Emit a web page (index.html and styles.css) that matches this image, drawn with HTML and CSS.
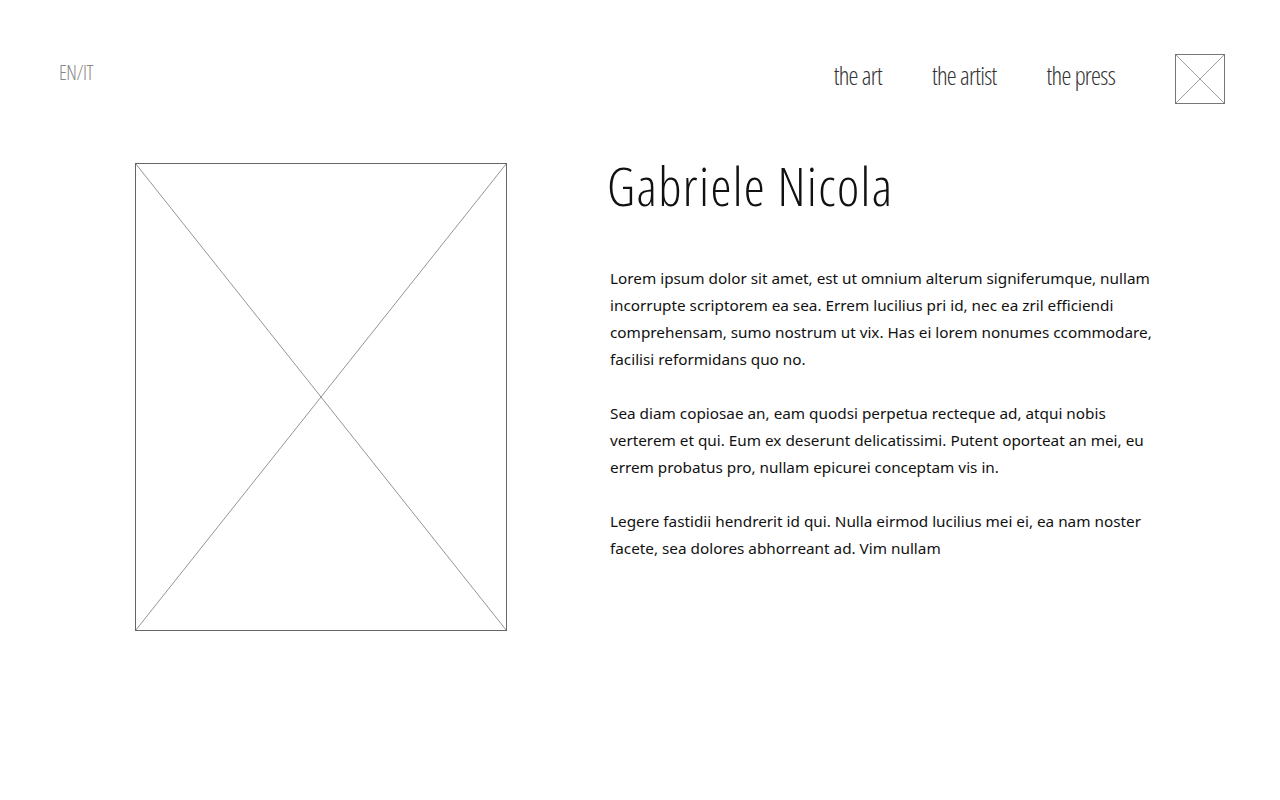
FILE: index.html
```html
<!DOCTYPE html>
<html lang="en">
<head>
<meta charset="utf-8">
<title>Gabriele Nicola</title>
<link rel="stylesheet" href="styles.css">
</head>
<body>
<header class="header">
  <div class="lang">EN/IT</div>
  <nav class="nav">
    <a href="#" class="nav-link">the art</a>
    <a href="#" class="nav-link">the artist</a>
    <a href="#" class="nav-link">the press</a>
  </nav>
  <div class="logo">
    <svg width="50" height="50" viewBox="0 0 50 50"><rect x="0.5" y="0.5" width="49" height="49" fill="none" stroke="#777" stroke-width="1"/><line x1="0.5" y1="0.5" x2="49.5" y2="49.5" stroke="#777" stroke-width="0.7"/><line x1="49.5" y1="0.5" x2="0.5" y2="49.5" stroke="#777" stroke-width="0.7"/></svg>
  </div>
</header>
<main class="main">
  <div class="photo">
    <svg width="372" height="468" viewBox="0 0 372 468"><rect x="0.5" y="0.5" width="371" height="467" fill="none" stroke="#666" stroke-width="1"/><line x1="0.5" y1="0.5" x2="371.5" y2="467.5" stroke="#666" stroke-width="0.7"/><line x1="371.5" y1="0.5" x2="0.5" y2="467.5" stroke="#666" stroke-width="0.7"/></svg>
  </div>
  <section class="bio">
    <h1 class="name">Gabriele Nicola</h1>
    <p class="text">Lorem ipsum dolor sit amet, est ut omnium alterum signiferumque, nullam incorrupte scriptorem ea sea. Errem lucilius pri id, nec ea zril efficiendi comprehensam, sumo nostrum ut vix. Has ei lorem nonumes ccommodare, facilisi reformidans quo no.</p>
    <p class="text">Sea diam copiosae an, eam quodsi perpetua recteque ad, atqui nobis verterem et qui. Eum ex deserunt delicatissimi. Putent oporteat an mei, eu errem probatus pro, nullam epicurei conceptam vis in.</p>
    <p class="text">Legere fastidii hendrerit id qui. Nulla eirmod lucilius mei ei, ea nam noster facete, sea dolores abhorreant ad. Vim nullam</p>
  </section>
</main>
</body>
</html>
```
FILE: styles.css
```css
html, body {
  margin: 0;
  padding: 0;
  background: #fff;
}
body {
  width: 1280px;
  height: 800px;
  font-family: "Open Sans", "Liberation Sans", sans-serif;
  color: #111;
}
.header {
  display: flex;
  align-items: flex-start;
  padding: 54px 55px 0 59px;
  height: 109px;
  box-sizing: border-box;
}
.lang {
  font-family: "Open Sans", sans-serif;
  font-stretch: 75%;
  font-weight: 300;
  font-size: 20px;
  color: #888;
  margin-top: 5px;
  letter-spacing: -0.4px;
}
.nav {
  margin-left: auto;
  display: flex;
  gap: 50px;
  margin-top: 4px;
  margin-right: 60px;
}
.nav-link {
  font-family: "Open Sans", sans-serif;
  font-stretch: 75%;
  font-weight: 300;
  font-size: 25px;
  color: #333;
  text-decoration: none;
  letter-spacing: -0.7px;
}
.logo {
  width: 50px;
  height: 50px;
}
.logo svg, .photo svg { display: block; }
.main {
  display: flex;
  align-items: flex-start;
  padding: 54px 0 0 135px;
}
.photo {
  width: 372px;
  height: 468px;
}
.bio {
  margin-left: 103px;
  width: 560px;
}
.name {
  margin: -2px 0 0 -3px;
  font-family: "Open Sans", sans-serif;
  font-stretch: 75%;
  font-weight: 300;
  font-size: 53px;
  line-height: 50px;
  letter-spacing: 1.4px;
  color: #111;
}
.text {
  font-family: "Noto Sans", sans-serif;
  font-size: 15.3px;
  line-height: 27px;
  margin: 0 0 27px 0;
  color: #111;
}
.name + .text { margin-top: 54px; }
```
